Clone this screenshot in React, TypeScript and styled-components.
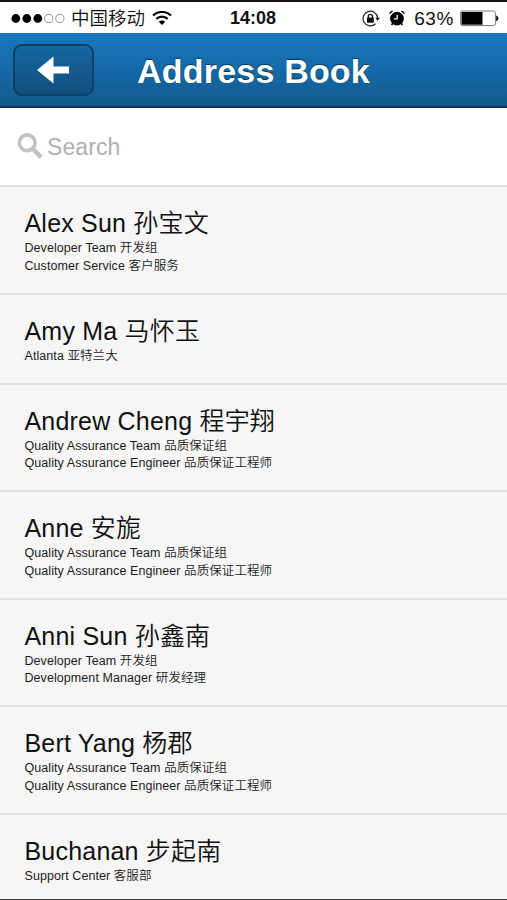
import React from "react";
import styled, { createGlobalStyle } from "styled-components";

const GlobalStyle = createGlobalStyle`
  * { box-sizing: border-box; }
  html, body { margin: 0; padding: 0; background: #f6f6f6; }
  body {
    font-family: "Liberation Sans", "Noto Sans CJK SC", sans-serif;
    color: #111;
    overflow: hidden;
  }
`;

const Screen = styled.div`
  width: 507px;
  height: 900px;
  display: flex;
  flex-direction: column;
  overflow: hidden;
  background: #f6f6f6;
  border-top: 2px solid #141214;
  border-bottom: 1px solid #3c3c3e;
`;

const StatusBar = styled.div`
  flex: none;
  height: 31px;
  padding: 0 8px 0 11px;
  display: grid;
  grid-template-columns: 219px 1fr auto;
  align-items: center;
  background: #fff;
`;

const StatusGroup = styled.div`
  display: flex;
  align-items: center;
`;

const Carrier = styled.span`
  margin: 0 7px 0 5px;
  font-size: 18.5px;
  line-height: 31px;
  font-weight: 350;
`;

const Clock = styled.span`
  font-size: 18px;
  line-height: 33px;
  font-weight: 700;
`;

const Percent = styled.span`
  margin: 1px 6px 0 9px;
  font-size: 19px;
  letter-spacing: 0.6px;
`;

const AlarmSlot = styled.span`
  display: flex;
  margin-left: 9px;
`;

const Header = styled.header`
  flex: none;
  height: 75px;
  display: grid;
  grid-template-columns: 94px 1fr 94px;
  align-items: center;
  background: linear-gradient(#1878be, #1569a8 50%, #135a8d);
  border-bottom: 2px solid #0c3350;
`;

const BackButton = styled.button`
  width: 81px;
  height: 52px;
  margin: 0 0 0 12.5px;
  padding: 0;
  display: flex;
  align-items: center;
  justify-content: center;
  border: 2px solid #0f4067;
  border-radius: 9px;
  background: linear-gradient(#1567a3, #124f7d);
`;

const Title = styled.h1`
  margin: 3px 0 0;
  text-align: center;
  color: #fff;
  font-size: 34px;
  line-height: 40px;
  letter-spacing: 0.2px;
  font-weight: 700;
  text-shadow: 0 -1px 1px rgba(0, 0, 0, 0.5);
  white-space: nowrap;
`;

const SearchBar = styled.div`
  flex: none;
  height: 77px;
  padding: 0 17px;
  display: flex;
  align-items: center;
  gap: 4px;
  background: #fff;
`;

const SearchLabel = styled.span`
  padding-top: 2px;
  color: #b0b0b0;
  font-size: 23px;
  letter-spacing: 0.1px;
`;

const List = styled.ul`
  margin: 0;
  padding: 0;
  list-style: none;
`;

const Row = styled.li<{ $lines: number }>`
  height: ${(p) => 72.5 + p.$lines * 17.5}px;
  padding: 21px 24.5px 0;
  border-top: 2px solid #e3e3e3;
`;

const Name = styled.div`
  height: 32px;
  font-size: 25px;
  line-height: 31px;
  letter-spacing: 0.2px;
  font-weight: 350;
  white-space: nowrap;
`;

const Detail = styled.div`
  height: 17.5px;
  font-size: 12.5px;
  line-height: 17.5px;
  letter-spacing: 0.07px;
  font-weight: 350;
  color: #1c1c1c;
  white-space: nowrap;
`;

const contacts = [
  { name: "Alex Sun 孙宝文", details: ["Developer Team 开发组", "Customer Service 客户服务"] },
  { name: "Amy Ma 马怀玉", details: ["Atlanta 亚特兰大"] },
  { name: "Andrew Cheng 程宇翔", details: ["Quality Assurance Team 品质保证组", "Quality Assurance Engineer 品质保证工程师"] },
  { name: "Anne 安旎", details: ["Quality Assurance Team 品质保证组", "Quality Assurance Engineer 品质保证工程师"] },
  { name: "Anni Sun 孙鑫南", details: ["Developer Team 开发组", "Development Manager 研发经理"] },
  { name: "Bert Yang 杨郡", details: ["Quality Assurance Team 品质保证组", "Quality Assurance Engineer 品质保证工程师"] },
  { name: "Buchanan 步起南", details: ["Support Center 客服部"] },
];

const SignalDots = () => (
  <svg width="55" height="12" viewBox="0 0 55 12">
    {[4.8, 15.8, 26.8].map((x) => (
      <circle key={x} cx={x} cy="5.5" r="4.4" fill="#000" />
    ))}
    {[37.8, 48.8].map((x) => (
      <circle key={x} cx={x} cy="5.5" r="4.1" fill="none" stroke="#777" strokeWidth="0.8" />
    ))}
  </svg>
);

const WifiIcon = () => (
  <svg width="20" height="15" viewBox="0 0 20 15" fill="none" stroke="#000">
    <path d="M1 4.6a12.8 12.8 0 0 1 18 0" strokeWidth="2.1" />
    <path d="M4.3 8a8.1 8.1 0 0 1 11.4 0" strokeWidth="2.1" />
    <path d="M10 14.1 6.8 10.8a4.6 4.6 0 0 1 6.4 0z" fill="#000" stroke="none" />
  </svg>
);

const RotationLockIcon = () => (
  <svg width="18" height="18" viewBox="0 0 18 18" fill="none">
    <path d="M15.6 8A7.3 7.3 0 1 0 13.4 13.8" stroke="#222" strokeWidth="1.2" />
    <path d="M13.3 7.8h4.6l-2.3 3.2z" fill="#111" />
    <path d="M6.3 8.1V6.5a2.1 2.1 0 0 1 4.2 0v1.6" stroke="#111" strokeWidth="1.4" />
    <rect x="5" y="7.6" width="6.8" height="5.2" rx="0.6" fill="#111" />
  </svg>
);

const AlarmIcon = () => (
  <svg width="16" height="17" viewBox="0 0 16 17">
    <circle cx="8" cy="8.6" r="6.9" fill="#000" />
    <path d="m3.6 13.4-1 1.6M12.4 13.4l1 1.6" stroke="#000" strokeWidth="1.6" />
    <path d="M.4 4.5A3 3 0 0 1 4.3 1zM15.6 4.5A3 3 0 0 0 11.7 1z" fill="#000" />
    <path d="m.8 5.4 4.3-4M15.2 5.4l-4.3-4" stroke="#fff" strokeWidth="0.6" />
    <path d="M8.2 4.7v4.2H4.9" fill="none" stroke="#fff" strokeWidth="1.3" />
  </svg>
);

const BatteryIcon = () => (
  <svg width="39" height="17" viewBox="0 0 39 17">
    <rect x="0.6" y="1" width="34.8" height="14.6" rx="2" fill="#fff" stroke="#777" strokeWidth="1" />
    <rect x="1.5" y="2" width="21" height="12.7" fill="#000" />
    <path d="M36.2 5.4c2.9.9 2.9 5 0 5.9z" fill="#000" />
  </svg>
);

const BackArrow = () => (
  <svg width="34" height="28" viewBox="0 0 34 28">
    <path d="M1 14 17.5.5V10.5H33v7H17.5v10z" fill="#fff" />
  </svg>
);

const SearchIcon = () => (
  <svg width="26" height="27" viewBox="0 0 26 27" fill="none" stroke="#c2c2c2">
    <circle cx="10.2" cy="9.8" r="7.9" strokeWidth="3.7" />
    <path d="m15.8 15.8 8.3 8.6" strokeWidth="4.4" />
  </svg>
);

export default function App() {
  return (
    <>
      <GlobalStyle />
      <Screen>
        <StatusBar>
          <StatusGroup>
            <SignalDots />
            <Carrier>中国移动</Carrier>
            <WifiIcon />
          </StatusGroup>
          <Clock>14:08</Clock>
          <StatusGroup>
            <RotationLockIcon />
            <AlarmSlot>
              <AlarmIcon />
            </AlarmSlot>
            <Percent>63%</Percent>
            <BatteryIcon />
          </StatusGroup>
        </StatusBar>
        <Header>
          <BackButton aria-label="Back">
            <BackArrow />
          </BackButton>
          <Title>Address Book</Title>
        </Header>
        <SearchBar>
          <SearchIcon />
          <SearchLabel>Search</SearchLabel>
        </SearchBar>
        <List>
          {contacts.map((contact) => (
            <Row key={contact.name} $lines={contact.details.length}>
              <Name>{contact.name}</Name>
              {contact.details.map((detail) => (
                <Detail key={detail}>{detail}</Detail>
              ))}
            </Row>
          ))}
        </List>
      </Screen>
    </>
  );
}
